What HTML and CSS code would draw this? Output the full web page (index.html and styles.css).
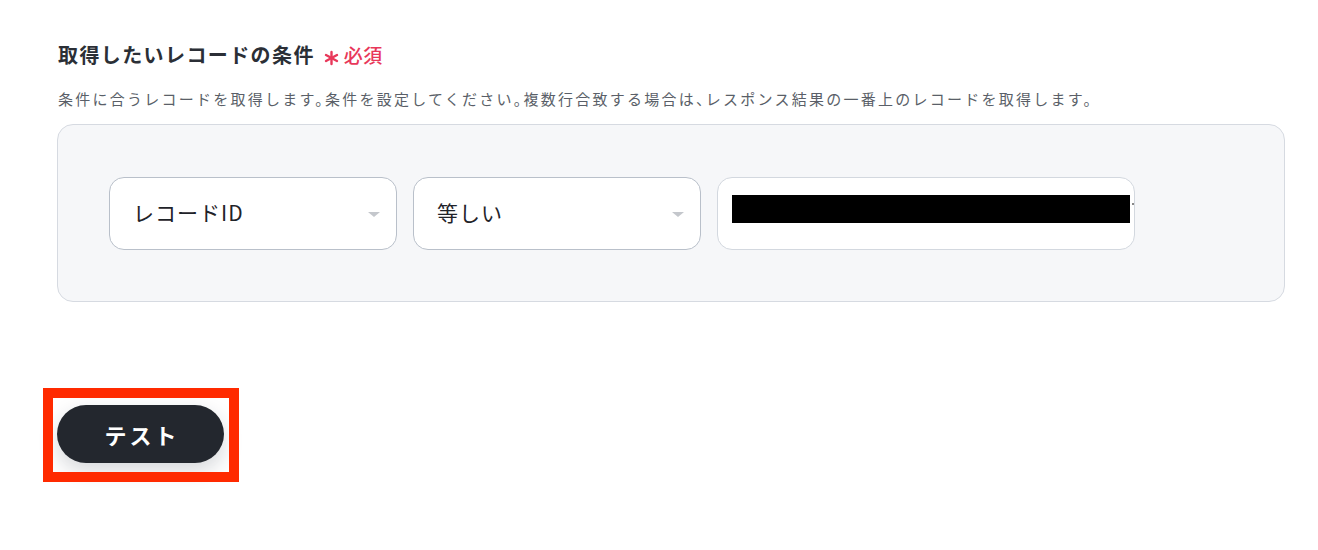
FILE: index.html
```html
<!DOCTYPE html>
<html lang="ja">
<head>
<meta charset="utf-8">
<link rel="stylesheet" href="styles.css">
</head>
<body>
<main class="page">
  <section class="field">
    <h2 class="field-title">取得したいレコードの条件<span class="req"><svg class="req-mark" width="17" height="16" viewBox="0 0 17 16" aria-hidden="true"><g stroke="#e8385a" stroke-width="2.4" stroke-linecap="round"><line x1="8.5" y1="2" x2="8.5" y2="14"/><line x1="3" y1="5" x2="14" y2="11"/><line x1="3" y1="11" x2="14" y2="5"/></g></svg>必須</span></h2>
    <p class="field-desc">条件に合うレコードを取得します。条件を設定してください。複数行合致する場合は、レスポンス結果の一番上のレコードを取得します。</p>
    <div class="panel">
      <div class="row">
        <div class="select"><span class="select-text">レコードID</span><span class="caret"></span></div>
        <div class="select"><span class="select-text">等しい</span><span class="caret"></span></div>
        <div class="input"><span class="redact"></span><span class="dot"></span></div>
      </div>
    </div>
  </section>
  <div class="actions">
    <button class="btn">テスト</button>
    <span class="highlight"></span>
  </div>
</main>
</body>
</html>
```
FILE: styles.css
```css
* { box-sizing: border-box; }
html, body { margin: 0; padding: 0; background: #fff; }
body {
  font-family: "Noto Sans CJK JP", "Noto Sans", sans-serif;
  color: #2b2f36;
}
.page {
  padding: 40px 33px 0 57px;
  width: 1318px;
  height: 550px;
}
.field-title {
  margin: 0;
  font-size: 20px;
  line-height: 30px;
  font-weight: 700;
  letter-spacing: 1.4px;
  color: #2b2f36;
  display: flex;
  align-items: center;
  padding-left: 1px;
}
.req {
  color: #e8385a;
  font-size: 19px;
  font-weight: 500;
  letter-spacing: 0.5px;
  margin-left: 8px;
  display: inline-flex;
  align-items: center;
}
.req-mark {
  display: block;
  margin-right: 4px;
  margin-top: 5px;
}
.field-desc {
  margin: 17px 0 0 1px;
  font-size: 15px;
  line-height: 24px;
  letter-spacing: 2.25px;
  color: #5a5f68;
  font-feature-settings: "halt";
}
.panel {
  margin-top: 13px;
  height: 178px;
  background: #f6f7f9;
  border: 1px solid #d6dae1;
  border-radius: 16px;
  padding: 52px 51px;
}
.row {
  display: flex;
  gap: 16px;
}
.select, .input {
  height: 73px;
  background: #fff;
  border-radius: 15px;
  display: flex;
  align-items: center;
}
.select {
  border: 1px solid #b9c0ca;
  width: 288px;
  padding: 0 16px 3px 23px;
  justify-content: space-between;
}
.select-text {
  font-size: 21px;
  color: #1f2329;
  letter-spacing: 1px;
}
.caret {
  width: 0;
  height: 0;
  border-left: 6px solid transparent;
  border-right: 6px solid transparent;
  border-top: 5px solid #c4c7cc;
  margin-top: 4px;
}
.input {
  width: 418px;
  border: 1px solid #d3d8df;
  padding-left: 14px;
  align-items: flex-start;
  padding-top: 17px;
}
.redact {
  display: block;
  width: 398px;
  height: 28px;
  background: #000;
}
.dot {
  display: block;
  width: 2px;
  height: 2px;
  background: #888;
  margin: 8px 0 0 2px;
}
.actions {
  position: relative;
  margin-top: 103px;
  height: 60px;
}
.btn {
  display: block;
  width: 167px;
  height: 58px;
  border: none;
  border-radius: 29px;
  background: #23272e;
  color: #fff;
  font-family: "Noto Sans CJK JP", "Noto Sans", sans-serif;
  font-size: 22px;
  font-weight: 700;
  letter-spacing: 3px;
  text-indent: 3px;
  box-shadow: 0 8px 20px rgba(30, 40, 55, 0.18);
  padding: 0;
}
.highlight {
  position: absolute;
  left: -14px;
  top: -17px;
  width: 196px;
  height: 94px;
  border: 10px solid #ff2a00;
  pointer-events: none;
}
```
